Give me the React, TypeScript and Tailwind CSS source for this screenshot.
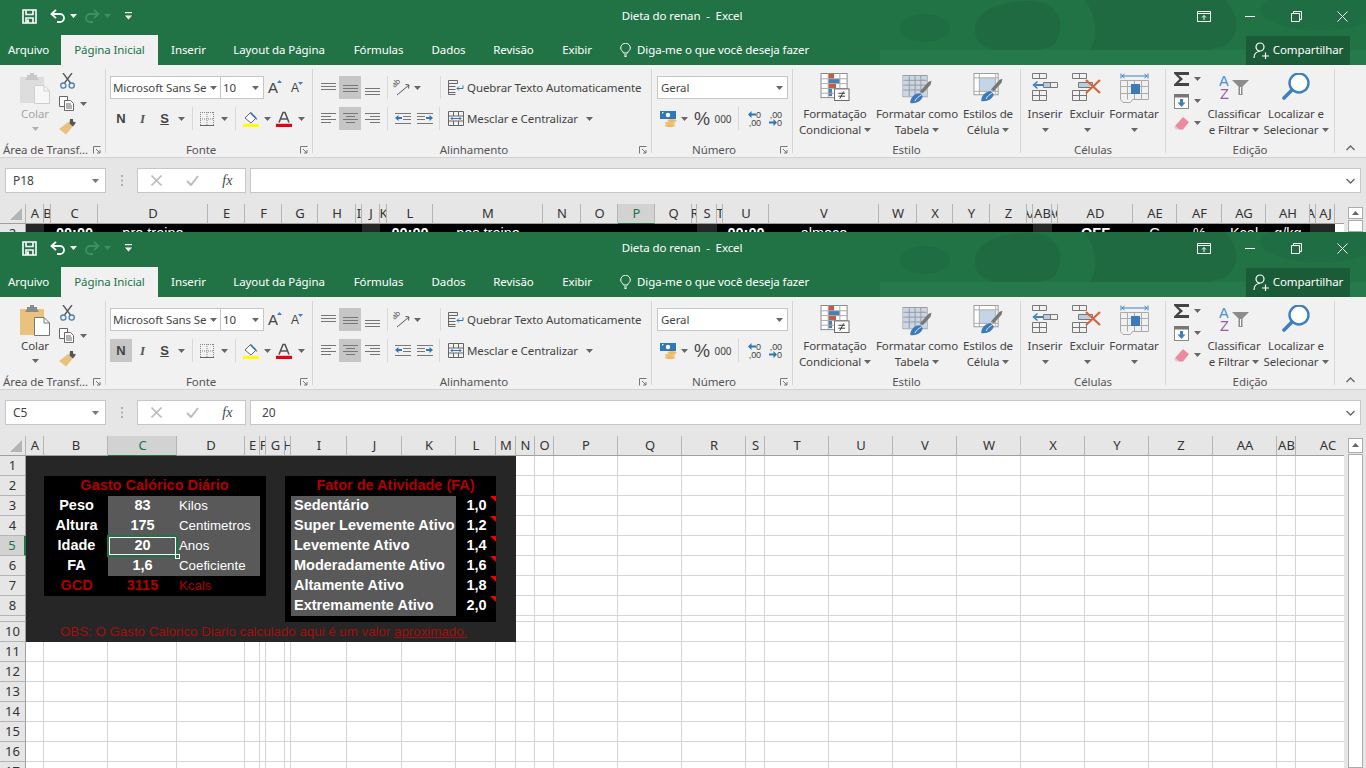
import React from "react";

const FONT = "font-['Noto_Sans','Liberation_Sans',sans-serif]";
const UI = "text-[11.5px] tracking-[-0.1px]";

/* ---------- tiny icons ---------- */
const Caret = ({ c = "#666" }: { c?: string }) => (
  <svg width="7" height="4" viewBox="0 0 7 4"><path d="M0 0h7L3.5 4z" fill={c} /></svg>
);
const SaveIcon = () => (
  <svg width="15" height="15" viewBox="0 0 15 15" fill="none" stroke="#fff" strokeWidth="1.6">
    <path d="M1 1h13v13H1z" /><path d="M4 1v4.5h7V1M4 14V9h7v5" /><rect x="5" y="10.5" width="2" height="3.5" fill="#fff" stroke="none" />
  </svg>
);
const UndoIcon = ({ c = "#fff" }: { c?: string }) => (
  <svg width="16" height="14" viewBox="0 0 16 14" fill="none" stroke={c} strokeWidth="1.8">
    <path d="M1.5 5h8.5a4 4 0 0 1 0 8H7" /><path d="M6 .8 1.500 5 6 9.200" />
  </svg>
);
const RedoIcon = () => (
  <svg width="16" height="14" viewBox="0 0 16 14" fill="none" stroke="#3f8f63" strokeWidth="1.8">
    <path d="M14.500 5H6a4 4 0 0 0 0 8h3" /><path d="M10 .8 14.500 5 10 9.200" />
  </svg>
);
const QatIcon = () => (
  <svg width="7" height="8" viewBox="0 0 7 8" fill="#fff"><rect width="7" height="1.2" /><path d="M0 3.500h7L3.500 7.500z" /></svg>
);
const RibbonDisplay = () => (
  <svg width="14" height="11" viewBox="0 0 14 11" fill="none" stroke="#fff"><path d="M.5.5h13v10H.5zM.5 2.500h13" /><path d="M7 9V4.500M5 6.500l2-2 2 2" /></svg>
);
const PasteIcon = ({ off }: { off: boolean }) => (
  <svg width="30" height="31" viewBox="0 0 30 31">
    <rect x="0" y="4" width="24" height="26" rx="1" fill={off ? "#dddddd" : "#e9c27d"} />
    <path d="M7 4V2h3V0h4v2h3v2l2 3H5z" fill={off ? "#c8c8c8" : "#8a8a8a"} />
    <path d="M14.500 12.500H24l5.500 5.500v12.500h-15z" fill={off ? "#f7f7f7" : "#fff"} stroke={off ? "#cfcfcf" : "#777"} />
    <path d="M24 12.500V18h5.500" fill="none" stroke={off ? "#cfcfcf" : "#777"} />
  </svg>
);
const CutIcon = () => (
  <svg width="15" height="16" viewBox="0 0 15 16" fill="none">
    <path d="M3 0l7.500 10M12 0 4.500 10" stroke="#555" strokeWidth="1.3" />
    <circle cx="3.300" cy="12.600" r="2.600" stroke="#4a7fb5" strokeWidth="1.3" /><circle cx="11.700" cy="12.600" r="2.600" stroke="#4a7fb5" strokeWidth="1.3" />
  </svg>
);
const CopyIcon = () => (
  <svg width="16" height="15" viewBox="0 0 16 15" fill="#fff" stroke="#666">
    <path d="M.5.5h8v10h-8z" /><path d="M5.500 4.500h6l3 3v7h-9z" /><path d="M7 8h5M7 10h6M7 12h6" fill="none" />
  </svg>
);
const BrushIcon = () => (
  <svg width="17" height="16" viewBox="0 0 17 16">
    <path d="M9 3 14 7l-4 5-3 3.500-7-5.500 3.500-2.500z" fill="#e8c27d" />
    <path d="M11 0h3v2.500l3 1-3 4-3.500-3z" fill="#555" />
  </svg>
);
const SmallA = ({ size, up }: { size: number; up: boolean }) => (
  <span className="flex items-start">
    <span className="font-['Liberation_Sans',sans-serif] text-[#444] leading-none" style={{ fontSize: size }}>A</span>
    <svg width="5" height="3" viewBox="0 0 5 3" className="-ml-[1px]"><path d={up ? "M0 3h5L2.500 0z" : "M0 0h5L2.500 3z"} fill="#3f7fbf" /></svg>
  </span>
);
const BorderIcon = () => (
  <svg width="14" height="14" viewBox="0 0 14 14" stroke="#888" strokeWidth="1" strokeDasharray="1 1" fill="none">
    <path d="M.5 0v14M7 0v14M13.500 0v14M0 .5h14M0 7h14" /><path d="M0 13.500h14" stroke="#666" strokeDasharray="none" />
  </svg>
);
const FillIcon = () => (
  <svg width="16" height="16" viewBox="0 0 16 16">
    <path d="M2 7 7.500 1.500 13 7l-5 5z" fill="#fff" stroke="#666" />
    <path d="M8 1 13 6l1.500 3-2-1L7 2.500z" fill="#3f76ad" />
    <rect y="13" width="16" height="3.500" fill="#ffff00" />
  </svg>
);
const FontColorIcon = () => (
  <svg width="16" height="16" viewBox="0 0 16 16">
    <path d="M3 11.500 7 1.500h2l4 10M4.800 8h6.400" fill="none" stroke="#555" strokeWidth="1.6" />
    <rect y="12.800" width="16" height="3.200" fill="#e60012" />
  </svg>
);
const Lines = ({ l }: { l: [number, number, number][] }) => (
  <svg width="15" height="14" viewBox="0 0 15 14" stroke="#777" strokeWidth="1">
    {l.map(([y, a, b], i) => (<path key={i} d={`M${a} ${y + 0.5}H${b}`} />))}
  </svg>
);
const OrientIcon = () => (
  <svg width="17" height="16" viewBox="0 0 17 16" fill="none">
    <text x="0" y="0" fontSize="8" fill="#555" fontFamily="Liberation Sans, sans-serif" transform="translate(1.500 8) rotate(-45)">ab</text>
    <path d="M16 5 4 15" stroke="#555" /><path d="M12.500 4.500 16 5l-.5 3.500" stroke="#555" />
  </svg>
);
const IndentIcon = ({ rev }: { rev?: boolean }) => (
  <svg width="16" height="12" viewBox="0 0 16 12">
    <path d={rev ? "M8 3.500h8M8 6.500h8M0 .5h16M0 10.500h16" : "M0 3.500h8M0 6.500h8M0 .5h16M0 10.500h16"} stroke="#777" fill="none" />
    <path d={rev ? "M0 5 3.500 2v2H7v2H3.500v2z" : "M16 5 12.500 2v2H9v2h3.500v2z"} fill="#2f77bb" />
  </svg>
);
const WrapIcon = () => (
  <svg width="16" height="15" viewBox="0 0 16 15" fill="none" stroke="#666">
    <path d="M.5.5h9v3h-9zM.5 6.500h7M.5 9.500h7M.5 12.500h7" /><path d="M.5 3.500v11h7" />
    <path d="M15 5.500v3h-6" stroke="#2f77bb" /><path d="M11 6.500l-2 2 2 2" stroke="#2f77bb" />
  </svg>
);
const MergeIcon = () => (
  <svg width="16" height="15" viewBox="0 0 16 15" fill="none" stroke="#666">
    <path d="M.5.5h15v14H.5zM.5 5h15M.5 10h15M5.500 .5V5M10.500.5V5M5.500 10v4.500M10.500 10v4.500" />
    <path d="M3 7.500h10" stroke="#2f77bb" /><path d="M4.500 6 3 7.500 4.500 9M11.500 6 13 7.500 11.500 9" stroke="#2f77bb" />
  </svg>
);
const CurrencyIcon = () => (
  <svg width="17" height="16" viewBox="0 0 17 16">
    <rect width="16" height="8" fill="#2f77bb" /><circle cx="8" cy="4" r="2.200" fill="#fff" /><path d="M2 1h2L2 3z" fill="#fff" />
    <ellipse cx="12" cy="9.500" rx="4.500" ry="1.600" fill="#f0b85f" /><ellipse cx="10" cy="12" rx="5" ry="1.600" fill="#e9c27d" /><ellipse cx="10" cy="14.500" rx="5" ry="1.600" fill="#f0b85f" />
  </svg>
);
const DecIcon = ({ a, b, dir }: { a: string; b: string; dir: "l" | "r" }) => (
  <span className="flex flex-col items-end w-[16px] leading-[8px] text-[9px] text-[#444] font-['Liberation_Sans',sans-serif]">
    <span className="flex items-center h-[8px]">
      {dir === "l" && <svg width="8" height="7" viewBox="0 0 8 7"><path d="M0 3.500 3.500 0v2.500H8v2H3.500V7z" fill="#2f77bb" /></svg>}
      {a}
    </span>
    <span className="flex items-center h-[8px]">
      {dir === "r" && <svg width="8" height="7" viewBox="0 0 8 7"><path d="M8 3.500 4.500 0v2.500H0v2h4.500V7z" fill="#2f77bb" /></svg>}
      {b}
    </span>
  </span>
);
const CondIcon = () => (
  <svg width="31" height="28" viewBox="0 0 31 29" className="mb-[3px]">
    <rect x=".5" y=".5" width="27" height="25" fill="#fff" stroke="#888" />
    <rect x="8" y="1" width="6" height="5" fill="#c55a3c" /><rect x="8" y="6" width="12" height="5" fill="#4a7fb5" /><rect x="8" y="11" width="8" height="5" fill="#c55a3c" /><rect x="8" y="16" width="4" height="8" fill="#4a7fb5" />
    <path d="M.5 6h27M.5 11h27M.5 16h27M.5 21h27M8 0v25M20 0v25" stroke="#aaa" fill="none" />
    <rect x="14.500" y="16.500" width="15" height="12" fill="#fff" stroke="#666" />
    <path d="M18.500 21h7M18.500 24h7M24 19l-4 7.500" stroke="#333" fill="none" />
  </svg>
);
const TableIcon = ({ cell }: { cell?: boolean }) => (
  <svg width="30" height="29" viewBox="0 0 30 30" className={cell ? "mb-[2px]" : ""}>
    <rect x=".5" y=".5" width="25" height="22" fill={cell ? "#fff" : "#f4f4f4"} stroke="#999" />
    <rect x={cell ? 6 : 1} y={cell ? 5 : 1} width={cell ? 17 : 24} height={cell ? 14 : 21} fill={cell ? "#c5d5e8" : "#c9d6e6"} />
    {!cell && <path d="M1 5.500h24M1 10.500h24M1 15.500h24M7 0v22M13 0v22M19 0v22" stroke="#999" fill="none" />}
    {cell && <path d="M.5 5h25M.5 19h25M6 0v22M23 0v22" stroke="#aaa" fill="none" />}
    <path d="M18 17 27 7l3-1-1 4-8 9z" fill="#777" />
    <path d="M8 29c0-5 4-10 10-10l3 3c-1 5-7 8-13 7z" fill="#3d7ab8" /><path d="M13 27c1-3 4-5 6-6" stroke="#dfeaf5" fill="none" />
  </svg>
);
const InsertIcon = () => (
  <svg width="26" height="28" viewBox="0 0 26 28" fill="none" stroke="#777" className="mb-[3px]">
    <path d="M.5 .5h14v5h-14zM7.500.5v5M.5 17.500h14v10h-14zM.5 22.500h14M7.500 17.500v10M11.500 9.500h14v5h-14zM18.500 9.500v5" />
    <path d="M11 12H3" stroke="#3f7fbf" strokeWidth="2" /><path d="M5.500 8.500 1.500 12l4 3.500" stroke="#3f7fbf" strokeWidth="1.5" />
    <rect x="12" y="10" width="6" height="4" fill="#b8cde2" stroke="none" />
  </svg>
);
const DeleteIcon = () => (
  <svg width="30" height="28" viewBox="0 0 30 28" fill="none" stroke="#777" className="mb-[3px]">
    <path d="M.5 .5h14v5h-14zM7.500.5v5M.5 17.500h14v10h-14zM.5 22.500h14M7.500 17.500v10M6.500 9.500h14v5h-14z" />
    <rect x="7" y="10" width="11" height="4" fill="#b8cde2" stroke="none" />
    <path d="M14 7l14 13M28 7 14 20" stroke="#d2663f" strokeWidth="2.2" />
  </svg>
);
const FormatIcon = () => (
  <svg width="29" height="31" viewBox="0 0 29 31" fill="none" stroke="#777">
    <path d="M1 .5v5M28 .5v5" stroke="#3f7fbf" /><path d="M2 3h25" stroke="#3f7fbf" /><path d="M4.500 1 2 3l2.500 2M24.500 1 27 3l-2.500 2" stroke="#3f7fbf" />
    <path d="M.5 7.500h28v19H12.500l-2 3H3l-2.500-3zM.5 13.500h28M.5 20.500h28M7.500 7.500v19M21.500 7.500v19M14.500 7.500v19" stroke="#aaa" />
    <rect x="11" y="11" width="9" height="10" fill="#3d7ab8" stroke="none" />
  </svg>
);
const SumIcon = () => (
  <svg width="15" height="14" viewBox="0 0 15 14"><path d="M0 0h15v3H4.500L9 7l-4.500 4H15v3H0v-1.500L5.500 7 0 1.500z" fill="#444" /></svg>
);
const FillDownIcon = () => (
  <svg width="15" height="15" viewBox="0 0 15 15">
    <rect x=".5" y=".5" width="14" height="14" fill="#fff" stroke="#888" /><rect width="15" height="3.500" fill="#777" />
    <path d="M7.500 13 3.500 8.500h2.500V5h3v3.500h2.500z" fill="#3f7fbf" />
  </svg>
);
const EraserIcon = () => (
  <svg width="15" height="13" viewBox="0 0 15 13"><path d="M9 0l6 5-6 7.500H5L1 9z" fill="#ee8aa0" /><path d="M1 9l4 3.500H2L0 10.500z" fill="#d4d4d4" /></svg>
);
const SortIcon = () => (
  <svg width="31" height="26" viewBox="0 0 31 26" className="mb-[4px]">
    <text x="0" y="11.500" fontSize="14.500" fill="#4a8fd0" fontFamily="Liberation Sans, sans-serif">A</text>
    <text x="1" y="25" fontSize="14.500" fill="#9b59a8" fontFamily="Liberation Sans, sans-serif">Z</text>
    <path d="M13 6h17l-6.500 6.500V21h-4v-8.500z" fill="#8c8c8c" /><path d="M21.500 13v7" stroke="#fff" />
  </svg>
);
const FindIcon = () => (
  <svg width="28" height="27" viewBox="0 0 28 27" fill="none" className="mb-[4px]">
    <circle cx="17" cy="10" r="9.500" stroke="#3f7fbf" strokeWidth="2.400" fill="#fff" />
    <path d="M10 17 2 25" stroke="#3f7fbf" strokeWidth="3.600" strokeLinecap="round" />
  </svg>
);
const Launcher = () => (
  <svg width="8" height="8" viewBox="0 0 8 8" fill="none" stroke="#777"><path d="M.5 7.500v-7h7" /><path d="M3 3l4 4M7 4v3H4" /></svg>
);
const ShareIcon = () => (
  <svg width="17" height="17" viewBox="0 0 17 17" fill="none" stroke="#fff" strokeWidth="1.2">
    <circle cx="7" cy="5" r="4" /><path d="M1 16c0-4 2.500-6.500 6-6.500" /><path d="M9 14h7M12.500 10.500v7" />
  </svg>
);
const Bulb = () => (
  <svg width="11" height="14" viewBox="0 0 11 14" fill="none" stroke="#fff"><path d="M3.500 10C3 8 .7 7.500.7 5a4.800 4.800 0 0 1 9.600 0c0 2.500-2.300 3-2.800 5zM4 12h3M4.500 13.500h2" /></svg>
);

/* ---------- ribbon helpers ---------- */
const Slot = ({ w, active, children }: { w: string; active?: boolean; children?: React.ReactNode }) => (
  <div className={`${w} h-[23px] flex items-center justify-center shrink-0 ${active ? "bg-[#c6c6c6]" : ""}`}>{children}</div>
);
const VSep = () => <div className="w-px h-[23px] bg-[#d8d8d8]" />;
const GroupLine = () => <div className="w-px h-[84px] mt-[4px] bg-[#d6d6d6] shrink-0" />;
const Group = ({ w, label, launcher, left, children }: { w: string; label: string; launcher?: boolean; left?: boolean; children: React.ReactNode }) => (
  <div className={`${w} flex flex-col shrink-0 mt-[4px]`}>
    <div className="h-[72px]">{children}</div>
    <div className={`h-[16px] pt-[1px] flex items-center text-[#555] leading-[16px] ${UI}`}>
      <div className={`flex-1 whitespace-nowrap ${left ? "text-left pl-[3px]" : "text-center"}`}>{label}</div>
      {launcher && <div className="w-[16px] flex justify-center"><Launcher /></div>}
    </div>
  </div>
);
const BigButton = ({ w, icon, l1, l2 }: { w: string; icon: React.ReactNode; l1: string; l2?: string }) => (
  <div className={`${w} flex flex-col items-center shrink-0 text-[#444] leading-[16px] whitespace-nowrap ${UI}`}>
    <div className="h-[32px] mt-[3px] flex items-end justify-center">{icon}</div>
    <div className="mt-[2px] h-[16px]">{l1}</div>
    <div className="h-[16px] flex items-center gap-[3px]">
      {l2 && <span>{l2}</span>}
      <Caret />
    </div>
  </div>
);

function Ribbon({ off, bold }: { off: boolean; bold: boolean }) {
  const textOff = off ? "text-[#a6a6a6]" : "text-[#444]";
  return (
    <div className={`h-[93px] bg-[#f1f1f1] border-b border-[#d2d2d2] flex text-[#444] leading-[16px] ${UI}`}>
      {/* Área de transferência */}
      <Group w="w-[105px]" label="Área de Transf..." launcher left>
        <div className="flex">
          <div className={`w-[58px] pl-[12px] flex flex-col items-center ${textOff}`}>
            <div className="mt-[4px] h-[31px]"><PasteIcon off={off} /></div>
            <div className="mt-[2px] h-[16px]">Colar</div>
            <div className="mt-[5px] flex"><Caret c={off ? "#b0b0b0" : "#666"} /></div>
          </div>
          <div className="flex flex-col">
            <Slot w="w-[18px]"><CutIcon /></Slot>
            <div className="flex"><Slot w="w-[18px]"><CopyIcon /></Slot><Slot w="w-[14px]"><Caret /></Slot></div>
            <Slot w="w-[18px]"><BrushIcon /></Slot>
          </div>
        </div>
      </Group>
      <GroupLine />
      {/* Fonte */}
      <Group w="w-[206px]" label="Fonte" launcher>
        <div className="pt-[7px] pl-[4px] flex flex-col gap-[8px]">
          <div className="flex h-[23px]">
            <div className="w-[111px] bg-white border border-[#c6c6c6] flex items-center pl-[2px] pr-[3px] justify-between whitespace-nowrap overflow-hidden">
              <span>Microsoft Sans Se</span><Caret />
            </div>
            <div className="w-[44px] -ml-px bg-white border border-[#c6c6c6] flex items-center pl-[2px] pr-[4px] justify-between"><span>10</span><Caret /></div>
            <Slot w="w-[22px]"><SmallA size={15} up /></Slot>
            <Slot w="w-[22px]"><SmallA size={12} up={false} /></Slot>
          </div>
          <div className="flex h-[23px] items-center">
            <Slot w="w-[22px]" active={bold}><span className="font-['Liberation_Sans',sans-serif] font-bold text-[13px] text-[#444]">N</span></Slot>
            <Slot w="w-[21px]"><span className="font-['Liberation_Serif',serif] italic font-bold text-[13px] text-[#555]">I</span></Slot>
            <Slot w="w-[23px]"><span className="font-['Liberation_Sans',sans-serif] font-bold text-[13px] underline text-[#444]">S</span></Slot>
            <Slot w="w-[11px]"><Caret /></Slot>
            <Slot w="w-[10px]"><VSep /></Slot>
            <Slot w="w-[20px]"><BorderIcon /></Slot>
            <Slot w="w-[14px]"><Caret /></Slot>
            <Slot w="w-[8px]"><VSep /></Slot>
            <Slot w="w-[23px]"><FillIcon /></Slot>
            <Slot w="w-[10px]"><Caret /></Slot>
            <Slot w="w-[24px]"><FontColorIcon /></Slot>
            <Slot w="w-[10px]"><Caret /></Slot>
          </div>
        </div>
      </Group>
      <GroupLine />
      {/* Alinhamento */}
      <Group w="w-[338px]" label="Alinhamento" launcher>
        <div className="pt-[7px] pl-[4px] flex flex-col gap-[8px] whitespace-nowrap">
          <div className="flex h-[23px] items-center">
            <Slot w="w-[22px]"><Lines l={[[2, 0, 15], [5, 0, 15], [8, 0, 15]]} /></Slot>
            <Slot w="w-[22px]" active><Lines l={[[4, 0, 15], [7, 0, 15], [10, 0, 15]]} /></Slot>
            <Slot w="w-[22px]"><Lines l={[[7, 0, 15], [10, 0, 15], [13, 0, 15]]} /></Slot>
            <Slot w="w-[8px]"><VSep /></Slot>
            <Slot w="w-[21px]"><OrientIcon /></Slot>
            <Slot w="w-[10px]"><Caret /></Slot>
            <div className="w-[18px]" />
            <VSep />
            <div className="w-[7px]" />
            <WrapIcon />
            <span className="ml-[3px]">Quebrar Texto Automaticamente</span>
          </div>
          <div className="flex h-[23px] items-center">
            <Slot w="w-[22px]"><Lines l={[[1, 0, 15], [4, 0, 10], [7, 0, 15], [10, 0, 10]]} /></Slot>
            <Slot w="w-[22px]" active><Lines l={[[1, 0, 15], [4, 3, 12], [7, 0, 15], [10, 3, 12]]} /></Slot>
            <Slot w="w-[22px]"><Lines l={[[1, 0, 15], [4, 5, 15], [7, 0, 15], [10, 5, 15]]} /></Slot>
            <Slot w="w-[8px]"><VSep /></Slot>
            <Slot w="w-[23px]"><IndentIcon rev /></Slot>
            <Slot w="w-[21px]"><IndentIcon /></Slot>
            <div className="w-[4px]" />
            <VSep />
            <div className="w-[8px]" />
            <MergeIcon />
            <span className="ml-[3px]">Mesclar e Centralizar</span>
            <span className="ml-[8px] flex"><Caret /></span>
          </div>
        </div>
      </Group>
      <GroupLine />
      {/* Número */}
      <Group w="w-[140px]" label="Número" launcher>
        <div className="pt-[7px] pl-[5px] flex flex-col gap-[8px]">
          <div className="w-[131px] h-[23px] bg-white border border-[#c6c6c6] flex items-center justify-between pl-[3px] pr-[4px]"><span>Geral</span><Caret /></div>
          <div className="flex h-[23px] items-center">
            <Slot w="w-[23px]"><CurrencyIcon /></Slot>
            <Slot w="w-[8px]"><Caret /></Slot>
            <div className="w-[4px]" />
            <Slot w="w-[20px]"><span className="text-[18px] text-[#444] font-['Liberation_Sans',sans-serif]">%</span></Slot>
            <Slot w="w-[22px]"><span className="text-[10px] text-[#444]">000</span></Slot>
            <div className="w-[4px]" />
            <VSep />
            <div className="w-[6px]" />
            <DecIcon a="0" b=",00" dir="l" />
            <div className="w-[5px]" />
            <DecIcon a=",00" b="0" dir="r" />
          </div>
        </div>
      </Group>
      <GroupLine />
      {/* Estilo */}
      <Group w="w-[227px]" label="Estilo">
        <div className="flex">
          <BigButton w="w-[84px]" icon={<CondIcon />} l1="Formatação" l2="Condicional" />
          <BigButton w="w-[80px]" icon={<TableIcon />} l1="Formatar como" l2="Tabela" />
          <BigButton w="w-[62px]" icon={<TableIcon cell />} l1="Estilos de" l2="Célula" />
        </div>
      </Group>
      <GroupLine />
      {/* Células */}
      <Group w="w-[144px]" label="Células">
        <div className="flex">
          <BigButton w="w-[48px]" icon={<InsertIcon />} l1="Inserir" />
          <BigButton w="w-[36px]" icon={<DeleteIcon />} l1="Excluir" />
          <BigButton w="w-[58px]" icon={<FormatIcon />} l1="Formatar" />
        </div>
      </Group>
      <GroupLine />
      {/* Edição */}
      <Group w="w-[168px]" label="Edição">
        <div className="flex">
          <div className="pl-[6px] flex flex-col -mt-px w-[38px] shrink-0">
            <div className="flex h-[22px]"><div className="w-[18px] flex items-center justify-center"><SumIcon /></div><div className="w-[14px] flex items-center justify-center"><Caret /></div></div>
            <div className="flex h-[22px]"><div className="w-[18px] flex items-center justify-center"><FillDownIcon /></div><div className="w-[14px] flex items-center justify-center"><Caret /></div></div>
            <div className="flex h-[22px]"><div className="w-[18px] flex items-center justify-center"><EraserIcon /></div><div className="w-[14px] flex items-center justify-center"><Caret /></div></div>
          </div>
          <BigButton w="w-[60px]" icon={<SortIcon />} l1="Classificar" l2="e Filtrar" />
          <BigButton w="w-[64px]" icon={<FindIcon />} l1="Localizar e" l2="Selecionar" />
        </div>
      </Group>
      <GroupLine />
      <div className="w-[31px] h-[84px] flex items-end justify-center pb-[2px] mt-[4px]">
        <svg width="9" height="6" viewBox="0 0 9 6" fill="none" stroke="#666" strokeWidth="1.4"><path d="M.5 5 4.500 1l4 4" /></svg>
      </div>
    </div>
  );
}

function TitleBar() {
  return (
    <div className="relative h-[65px] bg-[#217346] text-white overflow-hidden">
      <svg className="absolute inset-0" width="1366" height="65" viewBox="0 0 1366 65">
        <rect x="880" y="50" width="486" height="15" fill="#25794b" />
        <ellipse cx="925" cy="28" rx="25" ry="14" fill="#1f6e43" />
        <path d="M975 30C975 10 1000 1 1030 1C1055 1 1062 20 1060 30C1058 45 1050 50 1030 50H1000C985 50 975 42 975 30z" fill="#1f6a40" />
        <path d="M1085 0H1225C1240 15 1240 35 1225 45L1210 50H1090C1100 35 1095 15 1085 0z" fill="#1f6a40" />
        <ellipse cx="1320" cy="10" rx="60" ry="20" fill="#1f6e43" />
      </svg>
      <div className="relative h-[35px] pb-[3px] flex items-center">
        <div className="w-[14px]" />
        <div className="w-[30px] flex justify-center"><SaveIcon /></div>
        <div className="w-[5px]" />
        <div className="w-[18px] flex justify-center"><UndoIcon /></div>
        <div className="w-[13px] flex justify-center"><Caret c="#fff" /></div>
        <div className="w-[3px]" />
        <div className="w-[18px] flex justify-center"><RedoIcon /></div>
        <div className="w-[12px] flex justify-center"><Caret c="#3f8f63" /></div>
        <div className="w-[10px]" />
        <div className="w-[10px] flex justify-center"><QatIcon /></div>
        <div className={`flex-1 text-center whitespace-pre pl-[35px] ${UI}`}>Dieta do renan  -  Excel</div>
        <div className="w-[14px] ml-px flex justify-center"><RibbonDisplay /></div>
        <div className="w-[34px]" />
        <div className="w-[10px] h-px bg-white" />
        <div className="w-[36px]" />
        <svg width="11" height="11" viewBox="0 0 11 11" fill="none" stroke="#fff"><path d="M.5 2.500h8v8h-8zM2.500 2.500v-2h8v8h-2" /></svg>
        <div className="w-[35px]" />
        <svg width="11" height="11" viewBox="0 0 11 11" stroke="#fff"><path d="M.5.5l10 10M10.500.5l-10 10" /></svg>
        <div className="w-[18px]" />
      </div>
      <div className={`relative h-[30px] flex items-center whitespace-nowrap ${UI}`}>
        <div className="w-[61px] pl-[8px]">Arquivo</div>
        <div className="w-[97px] h-full bg-[#f1f1f1] text-[#217346] flex items-center justify-center">Página Inicial</div>
        <div className="w-[61px] text-center">Inserir</div>
        <div className="w-[120px] text-center">Layout da Página</div>
        <div className="w-[79px] text-center">Fórmulas</div>
        <div className="w-[61px] text-center">Dados</div>
        <div className="w-[69px] text-center">Revisão</div>
        <div className="w-[58px] text-center">Exibir</div>
        <div className="w-[14px]" />
        <Bulb />
        <div className="ml-[6px] flex-1">Diga-me o que você deseja fazer</div>
        <div className="w-[104px] h-[29px] bg-[#1a5c38] flex items-center justify-center gap-[3px]"><ShareIcon />Compartilhar</div>
        <div className="w-[16px]" />
      </div>
    </div>
  );
}

function FormulaBar({ name, value }: { name: string; value: string }) {
  return (
    <div className="h-[46px] bg-[#e6e6e6] pt-[10px] flex items-start text-[#444] text-[12px] shrink-0">
      <div className="w-[5px]" />
      <div className="w-[101px] h-[25px] pt-px bg-white border border-[#c6c6c6] flex items-center justify-between pl-[7px] pr-[6px]"><span>{name}</span><Caret c="#777" /></div>
      <div className="w-[31px] h-[25px] flex items-center justify-center">
        <svg width="2" height="11" viewBox="0 0 2 11" fill="#b0b0b0"><rect width="2" height="2" /><rect y="4.500" width="2" height="2" /><rect y="9" width="2" height="2" /></svg>
      </div>
      <div className="w-[109px] h-[25px] bg-white border border-[#c6c6c6] flex items-center">
        <div className="w-[37px] flex justify-center"><svg width="11" height="11" viewBox="0 0 11 11" stroke="#bdbdbd" strokeWidth="1.600"><path d="M.5.5l10 10M10.500.5l-10 10" /></svg></div>
        <div className="w-[36px] flex justify-center"><svg width="13" height="11" viewBox="0 0 13 11" fill="none" stroke="#bdbdbd" strokeWidth="2"><path d="M1 6l4 4 7-9" /></svg></div>
        <div className="w-[36px] text-center font-['Liberation_Serif',serif] italic text-[14px] text-[#444]">fx</div>
      </div>
      <div className="w-[4px]" />
      <div className="w-[1111px] h-[25px] pt-px bg-white border border-[#c6c6c6] flex items-center justify-between pl-[11px] pr-[5px]">
        <span>{value}</span>
        <svg width="9" height="6" viewBox="0 0 9 6" fill="none" stroke="#666" strokeWidth="1.400"><path d="M.5 1l4 4 4-4" /></svg>
      </div>
    </div>
  );
}

/* ---------- sheet ---------- */
const ARIAL = "font-['Liberation_Sans',sans-serif]";
const Head = ({ label, sel }: { label: string; sel?: boolean }) => (
  <div className={`h-[20px] overflow-hidden flex items-center justify-center border-r border-b-[1px] border-r-[#b4b4b4] text-[13px] ${sel ? "bg-[#d2d2d2] border-b-2 border-b-[#217346] text-[#217346]" : "bg-[#e6e6e6] border-b-[#9f9f9f] text-[#333]"} ${FONT}`}>
    <span className="whitespace-nowrap pl-[1px]">{label}</span>
  </div>
);
const RowHead = ({ label, sel }: { label: string; sel?: boolean }) => (
  <div className={`overflow-hidden flex items-center justify-center pt-px border-b border-b-[#b4b4b4] text-[13px] ${sel ? "bg-[#d2d2d2] border-r-2 border-r-[#217346] text-[#217346]" : "bg-[#e6e6e6] border-r border-r-[#9f9f9f] text-[#333]"} ${FONT}`}>{label}</div>
);
const Corner = () => (
  <div className="h-[20px] bg-[#e6e6e6] border-r border-b border-r-[#b4b4b4] border-b-[#9f9f9f] flex items-end justify-end pr-[3px] pb-[3px]">
    <svg width="12" height="12" viewBox="0 0 12 12"><path d="M12 0v12H0z" fill="#b4b4b4" /></svg>
  </div>
);

const TOP_COLS = ["A","B","C","D","E","F","G","H","I","J","K","L","M","N","O","P","Q","R","S","T","U","V","W","X","Y","Z","AA","AB","AC","AD","AE","AF","AG","AH","AI","AJ"];
const topDark = new Set(["A","J","S","AB","AI","AJ"]);
const topText: Record<string, [string, boolean]> = {
  C: ["00:00", true], D: ["pro treino", false], L: ["00:00", true], M: ["pos treino", false], U: ["00:00", true], V: ["almoço", false],
  AD: ["OFF", true], AE: ["G", false], AF: ["%", false], AG: ["Kcal", false], AH: ["g/kg", false],
};

function TopSheet() {
  return (
    <div className="h-[28px] flex overflow-hidden bg-white">
      <div className="w-[1344px] shrink-0 overflow-hidden">
        <div className="grid grid-cols-[26px_18px_7px_47px_110px_37px_37px_36px_38px_6px_18px_7px_46px_110px_38px_37px_37px_37px_5px_20px_6px_46px_110px_38px_36px_37px_37px_6px_19px_6px_75px_44px_45px_44px_44px_6px_19px_9px] grid-rows-[20px_20px] w-[1344px]">
          <Corner />
          {TOP_COLS.map((c) => <Head key={c} label={c} sel={c === "P"} />)}
          <div className="h-[20px] bg-[#e6e6e6] border-b border-b-[#9f9f9f]" />
          <div className="h-[20px] bg-[#e6e6e6] border-r border-r-[#9f9f9f] flex items-center justify-center text-[13px] text-[#333]">2</div>
          {TOP_COLS.map((c) => (
            <div key={c} className={`h-[20px] flex items-center justify-center text-white text-[14.5px] whitespace-nowrap ${ARIAL} ${topDark.has(c) ? "bg-[#262626]" : "bg-black"} ${topText[c]?.[1] ? "font-bold" : ""}`}>
              {topText[c]?.[0]}
            </div>
          ))}
          <div className="h-[20px] bg-white" />
        </div>
      </div>
      <ScrollBar />
    </div>
  );
}

const BOT_COLS = ["A","B","C","D","E","F","G","H","I","J","K","L","M","N","O","P","Q","R","S","T","U","V","W","X","Y","Z","AA","AB","AC"];
const ROW_NUMS = [1, 2, 3, 4, 5, 6, 7, 8, 9, 10, 11, 12, 13, 14, 15, 16, 17];
const RED = "text-[#b00000]";

type Cell = { span: number; text?: string; cls?: string };

function bgFor(col: number, row: number): string {
  if (row > 10 || col > 12) return "bg-white border-r border-b border-[#d4d4d4]";
  if (row === 1 || row === 10) return "bg-[#262626]";
  const block1 = col >= 1 && col <= 5 && row >= 2 && row <= 7;
  const gray1 = col >= 2 && col <= 4 && row >= 3 && row <= 6;
  const block2 = col >= 7 && col <= 11 && row >= 2 && row <= 9;
  const gray2 = col >= 8 && col <= 10 && row >= 3 && row <= 8;
  if (gray1 || gray2) return "bg-[#595959]";
  if (block1 || block2) return "bg-black";
  return "bg-[#262626]";
}

const BOLD = `font-bold text-[14.5px] ${ARIAL}`;
const NORMAL = `text-[13.3px] ${ARIAL}`;
const C = "justify-center";
const merged: Record<string, Cell> = {
  "2-1": { span: 5, text: "Gasto Calórico Diário", cls: `${BOLD} ${RED} justify-center pr-[1px]` },
  "2-8": { span: 4, text: "Fator de Atividade (FA)", cls: `${BOLD} ${RED} justify-center pl-[4px]` },
  "3-1": { span: 1, text: "Peso", cls: `${BOLD} text-white ${C} pl-[1px]` },
  "4-1": { span: 1, text: "Altura", cls: `${BOLD} text-white ${C} pl-[1px]` },
  "5-1": { span: 1, text: "Idade", cls: `${BOLD} text-white ${C} pl-[1px]` },
  "6-1": { span: 1, text: "FA", cls: `${BOLD} text-white ${C} pl-[1px]` },
  "7-1": { span: 1, text: "GCD", cls: `${BOLD} ${RED} ${C} pl-[1px]` },
  "3-2": { span: 1, text: "83", cls: `${BOLD} text-white ${C}` },
  "4-2": { span: 1, text: "175", cls: `${BOLD} text-white ${C}` },
  "5-2": { span: 1, text: "20", cls: `${BOLD} text-white ${C}` },
  "6-2": { span: 1, text: "1,6", cls: `${BOLD} text-white ${C}` },
  "7-2": { span: 1, text: "3115", cls: `${BOLD} ${RED} ${C}` },
  "3-3": { span: 2, text: "Kilos", cls: `${NORMAL} text-white pl-[2px]` },
  "4-3": { span: 2, text: "Centimetros", cls: `${NORMAL} text-white pl-[2px]` },
  "5-3": { span: 2, text: "Anos", cls: `${NORMAL} text-white pl-[2px]` },
  "6-3": { span: 2, text: "Coeficiente", cls: `${NORMAL} text-white pl-[2px]` },
  "7-3": { span: 2, text: "Kcals", cls: `${NORMAL} ${RED} pl-[2px]` },
  "3-8": { span: 3, text: "Sedentário", cls: `${BOLD} text-white pl-[3px]` },
  "4-8": { span: 3, text: "Super Levemente Ativo", cls: `${BOLD} text-white pl-[3px]` },
  "5-8": { span: 3, text: "Levemente Ativo", cls: `${BOLD} text-white pl-[3px]` },
  "6-8": { span: 3, text: "Moderadamente Ativo", cls: `${BOLD} text-white pl-[3px]` },
  "7-8": { span: 3, text: "Altamente Ativo", cls: `${BOLD} text-white pl-[3px]` },
  "8-8": { span: 3, text: "Extremamente Ativo", cls: `${BOLD} text-white pl-[3px]` },
  "3-11": { span: 1, text: "1,0", cls: `${BOLD} text-white ${C} pl-[1px]` },
  "4-11": { span: 1, text: "1,2", cls: `${BOLD} text-white ${C} pl-[1px]` },
  "5-11": { span: 1, text: "1,4", cls: `${BOLD} text-white ${C} pl-[1px]` },
  "6-11": { span: 1, text: "1,6", cls: `${BOLD} text-white ${C} pl-[1px]` },
  "7-11": { span: 1, text: "1,8", cls: `${BOLD} text-white ${C} pl-[1px]` },
  "8-11": { span: 1, text: "2,0", cls: `${BOLD} text-white ${C} pl-[1px]` },
};

function BottomSheet() {
  const cells: React.ReactNode[] = [];
  ROW_NUMS.forEach((r) => {
    cells.push(<RowHead key={`h${r}`} label={r === 9 ? "" : String(r)} sel={r === 5} />);
    let c = 0;
    while (c < BOT_COLS.length) {
      const key = `${r}-${c}`;
      if (r === 10 && c === 1) {
        cells.push(
          <div key={key} style={{ gridColumn: "span 12" }} className={`bg-[#262626] flex items-center pl-[16px] whitespace-nowrap text-[#a01010] text-[13.3px] ${ARIAL}`}>
            OBS: O Gasto Calorico Diario calculado aqui é um valor&nbsp;<span className="underline">aproximado.</span>
          </div>
        );
        c += 12;
        continue;
      }
      const m = merged[key];
      const span = m?.span ?? 1;
      const isNote = m && c === 11 && r >= 3 && r <= 8;
      const isSel = r === 5 && c === 2;
      cells.push(
        <div key={key} style={span > 1 ? { gridColumn: `span ${span}` } : undefined} className={`${bgFor(c, r)} min-w-0 flex items-center whitespace-nowrap ${m?.cls ?? ""} ${isNote || isSel ? "relative" : ""}`}>
          {m?.text}
          {isNote && <div className="absolute top-0 right-0 w-0 h-0 border-t-[6px] border-t-[#f00000] border-l-[6px] border-l-transparent" />}
          {isSel && (
            <>
              <div className="absolute -inset-[1px] border-2 border-[#217346]" />
              <div className="absolute inset-[1px] border border-white" />
              <div className="absolute -right-[3px] -bottom-[3px] w-[5px] h-[5px] bg-[#217346] border border-white z-10" />
            </>
          )}
        </div>
      );
      c += span;
    }
  });
  return (
    <div className="h-[332px] flex overflow-hidden bg-white">
      <div className="w-[1344px] shrink-0 overflow-hidden">
        <div className="grid w-[1360px] grid-cols-[26px_18px_64px_69px_68px_15px_6px_19px_6px_56px_55px_54px_40px_20px_19px_19px_64px_64px_64px_19px_64px_64px_64px_64px_64px_64px_64px_64px_19px_64px] grid-rows-[20px_20px_20px_20px_20px_20px_20px_20px_20px_6px_20px_20px_20px_20px_20px_20px_20px_20px]">
          <Corner />
          {BOT_COLS.map((c) => <Head key={c} label={c} sel={c === "C"} />)}
          {cells}
        </div>
      </div>
      <ScrollBar long />
    </div>
  );
}

function ScrollBar({ long }: { long?: boolean }) {
  return (
    <div className={`w-[22px] shrink-0 bg-[#e6e6e6] flex flex-col pl-[4px] ${long ? "pt-[2px]" : "pt-[3px]"}`}>
      <div className="w-[15px] h-[15px] bg-white border border-[#ababab] flex items-center justify-center">
        <svg width="7" height="4" viewBox="0 0 7 4"><path d="M0 4h7L3.500 0z" fill="#666" /></svg>
      </div>
      <div className={`w-[15px] mt-[1px] bg-white border border-[#ababab] ${long ? "h-[316px]" : "h-[14px]"}`} />
    </div>
  );
}

function Window({ off, bold, name, value, sheet, h }: { off: boolean; bold: boolean; name: string; value: string; sheet: React.ReactNode; h: string }) {
  return (
    <div className={`${h} overflow-hidden flex flex-col`}>
      <TitleBar />
      <Ribbon off={off} bold={bold} />
      <FormulaBar name={name} value={value} />
      {sheet}
    </div>
  );
}

export default function App() {
  return (
    <div className={`w-[1366px] h-[768px] overflow-hidden bg-white ${FONT}`}>
      <Window off bold={false} name="P18" value="" sheet={<TopSheet />} h="h-[232px]" />
      <Window off={false} bold name="C5" value="20" sheet={<BottomSheet />} h="h-[536px]" />
    </div>
  );
}
